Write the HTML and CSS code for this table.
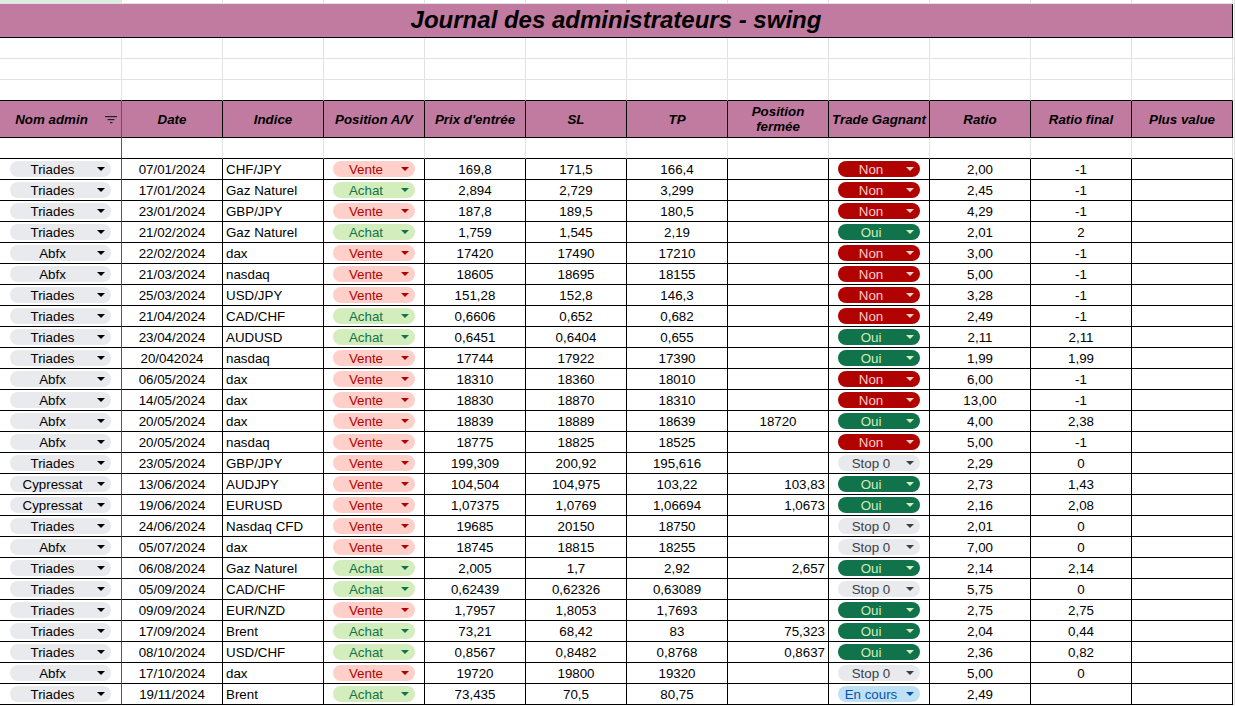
FILE: index.html
```html
<!DOCTYPE html>
<html lang="fr">
<head>
<meta charset="utf-8">
<title>Journal des administrateurs - swing</title>
<link rel="stylesheet" href="styles.css">
</head>
<body>
<div class="sheet">
<div class="row top"><div class="c a"></div><div class="c"></div><div class="c"></div><div class="c"></div><div class="c"></div><div class="c"></div><div class="c"></div><div class="c"></div><div class="c"></div><div class="c"></div><div class="c"></div><div class="c"></div><div class="c x"></div></div>
<div class="row title"><div class="c t">Journal des administrateurs - swing</div><div class="c x"></div></div>
<div class="row pre"><div class="c a"></div><div class="c"></div><div class="c"></div><div class="c"></div><div class="c"></div><div class="c"></div><div class="c"></div><div class="c"></div><div class="c"></div><div class="c"></div><div class="c"></div><div class="c"></div><div class="c x"></div></div>
<div class="row pre"><div class="c a"></div><div class="c"></div><div class="c"></div><div class="c"></div><div class="c"></div><div class="c"></div><div class="c"></div><div class="c"></div><div class="c"></div><div class="c"></div><div class="c"></div><div class="c"></div><div class="c x"></div></div>
<div class="row pre last"><div class="c a"></div><div class="c"></div><div class="c"></div><div class="c"></div><div class="c"></div><div class="c"></div><div class="c"></div><div class="c"></div><div class="c"></div><div class="c"></div><div class="c"></div><div class="c"></div><div class="c x"></div></div>
<div class="row head">
<div class="c a"><span class="hl">Nom admin</span><svg class="filter" width="12" height="8" viewBox="0 0 12 8"><rect x="0" y="0" width="12" height="1.2"/><rect x="2.5" y="3" width="7" height="1.2"/><rect x="5" y="6" width="2.5" height="1.2"/></svg></div>
<div class="c">Date</div>
<div class="c">Indice</div>
<div class="c">Position A/V</div>
<div class="c">Prix d'entrée</div>
<div class="c">SL</div>
<div class="c">TP</div>
<div class="c">Position<br>fermée</div>
<div class="c">Trade Gagnant</div>
<div class="c">Ratio</div>
<div class="c">Ratio final</div>
<div class="c">Plus value</div>
<div class="c x"></div>
</div>
<div class="row gap"><div class="c a"></div><div class="c"></div><div class="c"></div><div class="c"></div><div class="c"></div><div class="c"></div><div class="c"></div><div class="c"></div><div class="c"></div><div class="c"></div><div class="c"></div><div class="c"></div><div class="c x"></div></div>

<div class="row data"><div class="c a"><span class="chip ad gr"><span>Triades</span></span></div><div class="c">07/01/2024</div><div class="c l">CHF/JPY</div><div class="c"><span class="chip ve"><span>Vente</span></span></div><div class="c">169,8</div><div class="c">171,5</div><div class="c">166,4</div><div class="c r"></div><div class="c"><span class="chip no"><span>Non</span></span></div><div class="c">2,00</div><div class="c">-1</div><div class="c"></div><div class="c x"></div></div>
<div class="row data"><div class="c a"><span class="chip ad gr"><span>Triades</span></span></div><div class="c">17/01/2024</div><div class="c l">Gaz Naturel</div><div class="c"><span class="chip ac"><span>Achat</span></span></div><div class="c">2,894</div><div class="c">2,729</div><div class="c">3,299</div><div class="c r"></div><div class="c"><span class="chip no"><span>Non</span></span></div><div class="c">2,45</div><div class="c">-1</div><div class="c"></div><div class="c x"></div></div>
<div class="row data"><div class="c a"><span class="chip ad gr"><span>Triades</span></span></div><div class="c">23/01/2024</div><div class="c l">GBP/JPY</div><div class="c"><span class="chip ve"><span>Vente</span></span></div><div class="c">187,8</div><div class="c">189,5</div><div class="c">180,5</div><div class="c r"></div><div class="c"><span class="chip no"><span>Non</span></span></div><div class="c">4,29</div><div class="c">-1</div><div class="c"></div><div class="c x"></div></div>
<div class="row data"><div class="c a"><span class="chip ad gr"><span>Triades</span></span></div><div class="c">21/02/2024</div><div class="c l">Gaz Naturel</div><div class="c"><span class="chip ac"><span>Achat</span></span></div><div class="c">1,759</div><div class="c">1,545</div><div class="c">2,19</div><div class="c r"></div><div class="c"><span class="chip ou"><span>Oui</span></span></div><div class="c">2,01</div><div class="c">2</div><div class="c"></div><div class="c x"></div></div>
<div class="row data"><div class="c a"><span class="chip ad gr"><span>Abfx</span></span></div><div class="c">22/02/2024</div><div class="c l">dax</div><div class="c"><span class="chip ve"><span>Vente</span></span></div><div class="c">17420</div><div class="c">17490</div><div class="c">17210</div><div class="c r"></div><div class="c"><span class="chip no"><span>Non</span></span></div><div class="c">3,00</div><div class="c">-1</div><div class="c"></div><div class="c x"></div></div>
<div class="row data"><div class="c a"><span class="chip ad gr"><span>Abfx</span></span></div><div class="c">21/03/2024</div><div class="c l">nasdaq</div><div class="c"><span class="chip ve"><span>Vente</span></span></div><div class="c">18605</div><div class="c">18695</div><div class="c">18155</div><div class="c r"></div><div class="c"><span class="chip no"><span>Non</span></span></div><div class="c">5,00</div><div class="c">-1</div><div class="c"></div><div class="c x"></div></div>
<div class="row data"><div class="c a"><span class="chip ad gr"><span>Triades</span></span></div><div class="c">25/03/2024</div><div class="c l">USD/JPY</div><div class="c"><span class="chip ve"><span>Vente</span></span></div><div class="c">151,28</div><div class="c">152,8</div><div class="c">146,3</div><div class="c r"></div><div class="c"><span class="chip no"><span>Non</span></span></div><div class="c">3,28</div><div class="c">-1</div><div class="c"></div><div class="c x"></div></div>
<div class="row data"><div class="c a"><span class="chip ad gr"><span>Triades</span></span></div><div class="c">21/04/2024</div><div class="c l">CAD/CHF</div><div class="c"><span class="chip ac"><span>Achat</span></span></div><div class="c">0,6606</div><div class="c">0,652</div><div class="c">0,682</div><div class="c r"></div><div class="c"><span class="chip no"><span>Non</span></span></div><div class="c">2,49</div><div class="c">-1</div><div class="c"></div><div class="c x"></div></div>
<div class="row data"><div class="c a"><span class="chip ad gr"><span>Triades</span></span></div><div class="c">23/04/2024</div><div class="c l">AUDUSD</div><div class="c"><span class="chip ac"><span>Achat</span></span></div><div class="c">0,6451</div><div class="c">0,6404</div><div class="c">0,655</div><div class="c r"></div><div class="c"><span class="chip ou"><span>Oui</span></span></div><div class="c">2,11</div><div class="c">2,11</div><div class="c"></div><div class="c x"></div></div>
<div class="row data"><div class="c a"><span class="chip ad gr"><span>Triades</span></span></div><div class="c">20/042024</div><div class="c l">nasdaq</div><div class="c"><span class="chip ve"><span>Vente</span></span></div><div class="c">17744</div><div class="c">17922</div><div class="c">17390</div><div class="c r"></div><div class="c"><span class="chip ou"><span>Oui</span></span></div><div class="c">1,99</div><div class="c">1,99</div><div class="c"></div><div class="c x"></div></div>
<div class="row data"><div class="c a"><span class="chip ad gr"><span>Abfx</span></span></div><div class="c">06/05/2024</div><div class="c l">dax</div><div class="c"><span class="chip ve"><span>Vente</span></span></div><div class="c">18310</div><div class="c">18360</div><div class="c">18010</div><div class="c r"></div><div class="c"><span class="chip no"><span>Non</span></span></div><div class="c">6,00</div><div class="c">-1</div><div class="c"></div><div class="c x"></div></div>
<div class="row data"><div class="c a"><span class="chip ad gr"><span>Abfx</span></span></div><div class="c">14/05/2024</div><div class="c l">dax</div><div class="c"><span class="chip ve"><span>Vente</span></span></div><div class="c">18830</div><div class="c">18870</div><div class="c">18310</div><div class="c r"></div><div class="c"><span class="chip no"><span>Non</span></span></div><div class="c">13,00</div><div class="c">-1</div><div class="c"></div><div class="c x"></div></div>
<div class="row data"><div class="c a"><span class="chip ad gr"><span>Abfx</span></span></div><div class="c">20/05/2024</div><div class="c l">dax</div><div class="c"><span class="chip ve"><span>Vente</span></span></div><div class="c">18839</div><div class="c">18889</div><div class="c">18639</div><div class="c">18720</div><div class="c"><span class="chip ou"><span>Oui</span></span></div><div class="c">4,00</div><div class="c">2,38</div><div class="c"></div><div class="c x"></div></div>
<div class="row data"><div class="c a"><span class="chip ad gr"><span>Abfx</span></span></div><div class="c">20/05/2024</div><div class="c l">nasdaq</div><div class="c"><span class="chip ve"><span>Vente</span></span></div><div class="c">18775</div><div class="c">18825</div><div class="c">18525</div><div class="c r"></div><div class="c"><span class="chip no"><span>Non</span></span></div><div class="c">5,00</div><div class="c">-1</div><div class="c"></div><div class="c x"></div></div>
<div class="row data"><div class="c a"><span class="chip ad gr"><span>Triades</span></span></div><div class="c">23/05/2024</div><div class="c l">GBP/JPY</div><div class="c"><span class="chip ve"><span>Vente</span></span></div><div class="c">199,309</div><div class="c">200,92</div><div class="c">195,616</div><div class="c r"></div><div class="c"><span class="chip st"><span>Stop 0</span></span></div><div class="c">2,29</div><div class="c">0</div><div class="c"></div><div class="c x"></div></div>
<div class="row data"><div class="c a"><span class="chip ad gr"><span>Cypressat</span></span></div><div class="c">13/06/2024</div><div class="c l">AUDJPY</div><div class="c"><span class="chip ve"><span>Vente</span></span></div><div class="c">104,504</div><div class="c">104,975</div><div class="c">103,22</div><div class="c r">103,83</div><div class="c"><span class="chip ou"><span>Oui</span></span></div><div class="c">2,73</div><div class="c">1,43</div><div class="c"></div><div class="c x"></div></div>
<div class="row data"><div class="c a"><span class="chip ad gr"><span>Cypressat</span></span></div><div class="c">19/06/2024</div><div class="c l">EURUSD</div><div class="c"><span class="chip ve"><span>Vente</span></span></div><div class="c">1,07375</div><div class="c">1,0769</div><div class="c">1,06694</div><div class="c r">1,0673</div><div class="c"><span class="chip ou"><span>Oui</span></span></div><div class="c">2,16</div><div class="c">2,08</div><div class="c"></div><div class="c x"></div></div>
<div class="row data"><div class="c a"><span class="chip ad gr"><span>Triades</span></span></div><div class="c">24/06/2024</div><div class="c l">Nasdaq CFD</div><div class="c"><span class="chip ve"><span>Vente</span></span></div><div class="c">19685</div><div class="c">20150</div><div class="c">18750</div><div class="c r"></div><div class="c"><span class="chip st"><span>Stop 0</span></span></div><div class="c">2,01</div><div class="c">0</div><div class="c"></div><div class="c x"></div></div>
<div class="row data"><div class="c a"><span class="chip ad gr"><span>Abfx</span></span></div><div class="c">05/07/2024</div><div class="c l">dax</div><div class="c"><span class="chip ve"><span>Vente</span></span></div><div class="c">18745</div><div class="c">18815</div><div class="c">18255</div><div class="c r"></div><div class="c"><span class="chip st"><span>Stop 0</span></span></div><div class="c">7,00</div><div class="c">0</div><div class="c"></div><div class="c x"></div></div>
<div class="row data"><div class="c a"><span class="chip ad gr"><span>Triades</span></span></div><div class="c">06/08/2024</div><div class="c l">Gaz Naturel</div><div class="c"><span class="chip ac"><span>Achat</span></span></div><div class="c">2,005</div><div class="c">1,7</div><div class="c">2,92</div><div class="c r">2,657</div><div class="c"><span class="chip ou"><span>Oui</span></span></div><div class="c">2,14</div><div class="c">2,14</div><div class="c"></div><div class="c x"></div></div>
<div class="row data"><div class="c a"><span class="chip ad gr"><span>Triades</span></span></div><div class="c">05/09/2024</div><div class="c l">CAD/CHF</div><div class="c"><span class="chip ac"><span>Achat</span></span></div><div class="c">0,62439</div><div class="c">0,62326</div><div class="c">0,63089</div><div class="c r"></div><div class="c"><span class="chip st"><span>Stop 0</span></span></div><div class="c">5,75</div><div class="c">0</div><div class="c"></div><div class="c x"></div></div>
<div class="row data"><div class="c a"><span class="chip ad gr"><span>Triades</span></span></div><div class="c">09/09/2024</div><div class="c l">EUR/NZD</div><div class="c"><span class="chip ve"><span>Vente</span></span></div><div class="c">1,7957</div><div class="c">1,8053</div><div class="c">1,7693</div><div class="c r"></div><div class="c"><span class="chip ou"><span>Oui</span></span></div><div class="c">2,75</div><div class="c">2,75</div><div class="c"></div><div class="c x"></div></div>
<div class="row data"><div class="c a"><span class="chip ad gr"><span>Triades</span></span></div><div class="c">17/09/2024</div><div class="c l">Brent</div><div class="c"><span class="chip ac"><span>Achat</span></span></div><div class="c">73,21</div><div class="c">68,42</div><div class="c">83</div><div class="c r">75,323</div><div class="c"><span class="chip ou"><span>Oui</span></span></div><div class="c">2,04</div><div class="c">0,44</div><div class="c"></div><div class="c x"></div></div>
<div class="row data"><div class="c a"><span class="chip ad gr"><span>Triades</span></span></div><div class="c">08/10/2024</div><div class="c l">USD/CHF</div><div class="c"><span class="chip ac"><span>Achat</span></span></div><div class="c">0,8567</div><div class="c">0,8482</div><div class="c">0,8768</div><div class="c r">0,8637</div><div class="c"><span class="chip ou"><span>Oui</span></span></div><div class="c">2,36</div><div class="c">0,82</div><div class="c"></div><div class="c x"></div></div>
<div class="row data"><div class="c a"><span class="chip ad gr"><span>Abfx</span></span></div><div class="c">17/10/2024</div><div class="c l">dax</div><div class="c"><span class="chip ve"><span>Vente</span></span></div><div class="c">19720</div><div class="c">19800</div><div class="c">19320</div><div class="c r"></div><div class="c"><span class="chip st"><span>Stop 0</span></span></div><div class="c">5,00</div><div class="c">0</div><div class="c"></div><div class="c x"></div></div>
<div class="row data"><div class="c a"><span class="chip ad gr"><span>Triades</span></span></div><div class="c">19/11/2024</div><div class="c l">Brent</div><div class="c"><span class="chip ac"><span>Achat</span></span></div><div class="c">73,435</div><div class="c">70,5</div><div class="c">80,75</div><div class="c r"></div><div class="c"><span class="chip ec"><span>En cours</span></span></div><div class="c">2,49</div><div class="c"></div><div class="c"></div><div class="c x"></div></div>
</div>
</body>
</html>
```

FILE: styles.css
```css
* { box-sizing: border-box; }
html, body { margin: 0; padding: 0; background: #fff; overflow: hidden; }
body {
  font-family: "Liberation Sans", Arial, sans-serif;
  font-size: 13.33px;
  color: #000;
}
.sheet { width: 1235px; }
.row {
  display: grid;
  grid-template-columns: 122px repeat(11, 101px) 1fr;
  height: 21px;
}
.c {
  border-right: 1px solid #e2e2e2;
  border-bottom: 1px solid #e2e2e2;
  display: flex;
  align-items: center;
  justify-content: center;
  white-space: nowrap;
  overflow: hidden;
  min-width: 0;
}
.c.l { justify-content: flex-start; padding-left: 3px; }
.c.r { justify-content: flex-end; padding-right: 3px; }

/* top sliver row */
.top { height: 4px; }
.top .a { background: #dcefdf; }

/* title */
.title { height: 34px; }
.title .t {
  grid-column: 1 / 13;
  background: #c27ba0;
  border-right-color: #000;
  border-bottom-color: #000;
  font-size: 24px;
  font-weight: bold;
  font-style: italic;
  padding-bottom: 2px;
}

/* row above header: black bottom edge */
.pre.last .c { border-bottom-color: #000; }
.pre.last .x { border-bottom-color: #e2e2e2; }

/* header */
.head { height: 37px; }
.head .c {
  background: #c27ba0;
  border-color: #000;
  font-weight: bold;
  font-style: italic;
  text-align: center;
  line-height: 15px;
  white-space: normal;
}
.head .a { border-right-color: #188038; padding-right: 4px; }
.head .x { background: #fff; border-color: #e2e2e2; }
.hl { flex: 1; text-align: center; margin-right: 2px; }
.filter { fill: #202124; flex: none; margin-top: 1px; }

/* empty row below header */
.gap .c { border-bottom-color: #000; }
.gap .a { border-right-color: #188038; }
.gap .x { border-bottom-color: #e2e2e2; }

/* data rows */
.data .c { border-color: #000; }
.data .a { border-right-color: #188038; }
.data .x { border-color: #e2e2e2; }

/* chips */
.chip {
  display: flex;
  align-items: center;
  width: 82px;
  height: 16px;
  border-radius: 8px;
  padding-right: 6px;
  flex: none;
}
.chip > span { flex: 1; text-align: center; }
.chip::after {
  content: "";
  flex: none;
  margin-left: 2px;
  border-left: 4px solid transparent;
  border-right: 4px solid transparent;
  border-top: 4px solid currentColor;
}
.chip.ad { width: 101px; }
.gr { background: #e8eaed; color: #000; }
.ve { background: #ffcfc9; color: #b10202; }
.ac { background: #d4edbc; color: #11734b; }
.no { background: #b10202; color: #ffcfc9; }
.ou { background: #11734b; color: #d4edbc; }
.st { background: #e8eaed; color: #3c4043; }
.ec { background: #bfe1f6; color: #0a53a8; }
```
